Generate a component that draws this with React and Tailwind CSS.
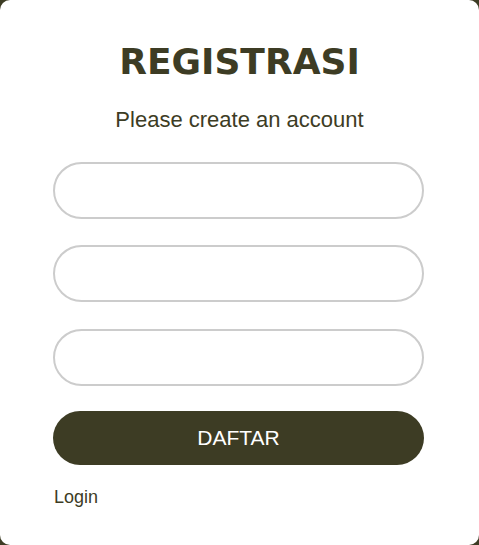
export default function App() {
  return (
    <div className="min-h-screen bg-[#3d3c24]">
      <div className="w-[479px] h-[545px] bg-white rounded-[10px] flex flex-col font-['Liberation_Sans',Arial,sans-serif] text-[#3d3c24]">
        <h1 className="pt-[42px] text-center text-[36px] leading-[40px] font-bold font-['DejaVu_Sans',Verdana,sans-serif]">
          REGISTRASI
        </h1>
        <p className="mt-[25px] text-center text-[22px] leading-[26px]">Please create an account</p>

        <form className="mt-[29px] ml-[53px] w-[371px] flex flex-col">
          <input className="h-[57px] rounded-full border-2 border-[#cccccc] px-5 outline-none" />
          <input type="email" className="mt-[26px] h-[57px] rounded-full border-2 border-[#cccccc] px-5 outline-none" />
          <input type="password" className="mt-[27px] h-[57px] rounded-full border-2 border-[#cccccc] px-5 outline-none" />
          <button type="submit" className="mt-[25px] h-[54px] rounded-full bg-[#3d3c24] text-white text-[21px]">
            DAFTAR
          </button>
          <a href="#" className="mt-[21px] ml-[1px] text-[18px] leading-[22px] text-[#3d3c24]">
            Login
          </a>
        </form>
      </div>
    </div>
  );
}
